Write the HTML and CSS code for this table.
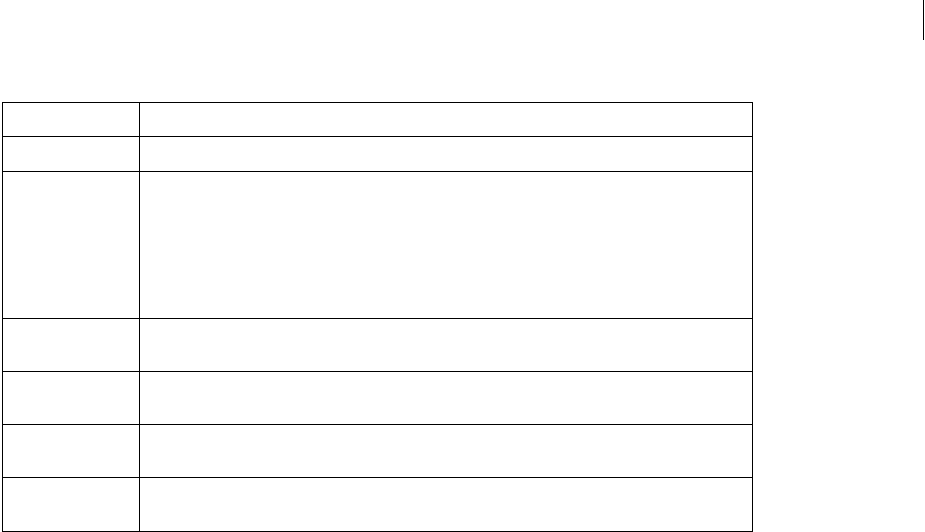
FILE: index.html
```html
<!DOCTYPE html>
<html>
<head>
<meta charset="utf-8">
<link rel="stylesheet" href="styles.css">
</head>
<body>
<div class="top"><div class="caret"></div></div>
<table class="grid">
  <colgroup><col class="c1"><col class="c2"></colgroup>
  <tr class="r34"><td></td><td></td></tr>
  <tr class="r35"><td></td><td></td></tr>
  <tr class="r147"><td></td><td></td></tr>
  <tr class="r53"><td></td><td></td></tr>
  <tr class="r53"><td></td><td></td></tr>
  <tr class="r53"><td></td><td></td></tr>
  <tr class="r54"><td></td><td></td></tr>
</table>
</body>
</html>
```
FILE: styles.css
```css
html, body {
  margin: 0;
  padding: 0;
  background: #fff;
  font-family: "Liberation Serif", serif;
}
.top {
  height: 102px;
  display: flex;
  justify-content: flex-end;
  padding-right: 1px;
}
.caret {
  width: 1px;
  height: 40px;
  background: #000;
}
.grid {
  border-collapse: collapse;
  margin-left: 2px;
  width: 751px;
  table-layout: fixed;
}
.grid td {
  border: 1px solid #000;
  padding: 0;
}
.c1 { width: 137px; }
.r34 { height: 34px; }
.r35 { height: 35px; }
.r147 { height: 147px; }
.r53 { height: 53px; }
.r54 { height: 54px; }
```
